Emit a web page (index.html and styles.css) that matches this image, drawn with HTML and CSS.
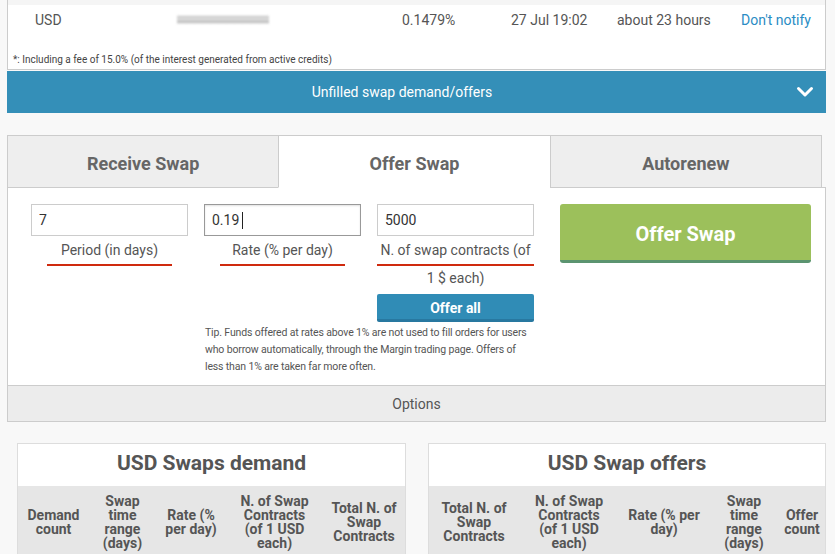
FILE: index.html
```html
<!DOCTYPE html>
<html lang="en">
<head>
    <meta charset="UTF-8">
    <meta name="viewport" content="width=device-width, initial-scale=1.0">
    <title>Swap</title>
    <link rel="stylesheet" href="styles.css">
</head>
<body>
    <div class="page">
        <div class="rates">
            <div class="rates-stripe"></div>
            <div class="rate-row">
                <span>USD</span>
                <span><span class="blurred"></span></span>
                <span>0.1479%</span>
                <span>27 Jul 19:02</span>
                <span>about 23 hours</span>
                <a href="#" class="notify-link">Don't notify</a>
            </div>
            <div class="fee-note">*: Including a fee of 15.0% (of the interest generated from active credits)</div>
        </div>

        <div class="unfilled-bar">
            <span></span>
            <span class="unfilled-title">Unfilled swap demand/offers</span>
            <svg class="chevron" width="18" height="12" viewBox="0 0 18 12">
                <polyline points="2.5,2.5 9,9 15.5,2.5" fill="none" stroke="#fff" stroke-width="3" stroke-linecap="round" stroke-linejoin="round"/>
            </svg>
        </div>

        <div class="swap">
            <div class="tabs">
                <div class="tab">Receive Swap</div>
                <div class="tab active">Offer Swap</div>
                <div class="tab">Autorenew</div>
            </div>
            <div class="swap-body">
                <div class="swap-form">
                    <div class="fields">
                        <div class="field">
                            <input type="text" value="7">
                            <div class="field-label">Period (in days)</div>
                        </div>
                        <div class="field">
                            <div class="input-wrap">
                                <input type="text" value="0.19" class="focused">
                                <span class="caret"></span>
                            </div>
                            <div class="field-label">Rate (% per day)</div>
                        </div>
                        <div class="field">
                            <input type="text" value="5000">
                            <div class="field-label wide">N. of swap contracts (of 1 $ each)</div>
                            <button class="offer-all">Offer all</button>
                        </div>
                        <p class="tip">Tip. Funds offered at rates above 1% are not used to fill orders for users who borrow automatically, through the Margin trading page. Offers of less than 1% are taken far more often.</p>
                    </div>
                    <button class="offer-btn">Offer Swap</button>
                </div>
                <div class="options">Options</div>
            </div>
        </div>

        <div class="books">
            <div class="book">
                <div class="book-title">USD Swaps demand</div>
                <table class="book-table">
                    <colgroup>
                        <col style="width: 71px">
                        <col style="width: 67px">
                        <col style="width: 70px">
                        <col style="width: 97px">
                        <col style="width: 82px">
                    </colgroup>
                    <tr>
                        <th>Demand count</th>
                        <th>Swap time range (days)</th>
                        <th>Rate (% per day)</th>
                        <th class="wide-pad">N. of Swap Contracts (of 1 USD each)</th>
                        <th>Total N. of Swap Contracts</th>
                    </tr>
                </table>
            </div>
            <div class="book">
                <div class="book-title">USD Swap offers</div>
                <table class="book-table">
                    <colgroup>
                        <col style="width: 90px">
                        <col style="width: 100px">
                        <col style="width: 90px">
                        <col style="width: 70px">
                        <col style="width: 46px">
                    </colgroup>
                    <tr>
                        <th>Total N. of Swap Contracts</th>
                        <th class="wide-pad">N. of Swap Contracts (of 1 USD each)</th>
                        <th>Rate (% per day)</th>
                        <th>Swap time range (days)</th>
                        <th>Offer count</th>
                    </tr>
                </table>
            </div>
        </div>
    </div>
</body>
</html>
```

FILE: styles.css
```css
body {
    margin: 0;
    font-family: Roboto, "Liberation Sans", sans-serif;
    background-color: #f8f8f8;
    color: #555;
}

.page {
    width: 819px;
    margin-left: 7px;
}

/* active credits panel */
.rates {
    background-color: #fff;
    border: 1px solid #ccc;
    border-top: none;
}

.rates-stripe {
    height: 5px;
    background-color: #f5f5f5;
}

.rate-row {
    display: grid;
    grid-template-columns: 142px 225px 109px 106px 124px auto;
    align-items: center;
    height: 29px;
    padding-left: 27px;
    font-size: 14px;
}

.blurred {
    display: block;
    width: 92px;
    height: 9px;
    background: linear-gradient(#eee, #bbb 30%, #ddd 50%, #aaa 70%, #e4e4e4);
    filter: blur(1.2px);
    opacity: 0.8;
}

.notify-link {
    color: #2a8cc4;
    text-decoration: none;
}

.fee-note {
    font-size: 10px;
    line-height: 12px;
    padding: 20px 5px 3px;
    color: #444;
}

/* collapsible bar */
.unfilled-bar {
    display: grid;
    grid-template-columns: 1fr auto 1fr;
    align-items: center;
    height: 42px;
    margin-top: 1px;
    background-color: #348fb8;
    color: #fff;
    font-size: 14px;
}

.unfilled-title {
    margin-right: 29px;
}

.chevron {
    justify-self: end;
    margin-right: 12px;
}

/* swap tabs */
.swap {
    margin-top: 22px;
}

.tabs {
    display: flex;
    width: 815px;
}

.tab {
    flex: 1;
    height: 51px;
    line-height: 56px;
    text-align: center;
    font-size: 18px;
    font-weight: 700;
    color: #666;
    background-color: #eee;
    border: 1px solid #ccc;
    border-right: none;
    overflow: hidden;
}

.tab:last-child {
    border-right: 1px solid #ccc;
}

.tab.active {
    background-color: #fff;
    border-bottom-color: #fff;
    position: relative;
}

.swap-body {
    margin-top: -1px;
    background-color: #fff;
    border: 1px solid #ccc;
}

.swap-form {
    display: flex;
    align-items: flex-start;
    gap: 26px;
    padding: 16px 0 10px 23px;
}

.fields {
    display: grid;
    grid-template-columns: repeat(3, 157px);
    column-gap: 16px;
}

.field {
    display: flex;
    flex-direction: column;
}

.input-wrap {
    display: flex;
    position: relative;
}

.input-wrap input {
    flex: 1;
    min-width: 0;
}

.field input {
    box-sizing: border-box;
    height: 32px;
    padding: 0 7px;
    border: 1px solid #ccc;
    font-family: inherit;
    font-size: 14px;
    color: #333;
    outline: none;
}

.field input.focused {
    border-color: #999;
    box-shadow: inset 0 1px 2px rgba(0, 0, 0, 0.12);
}

/* text cursor after the typed value */
.caret {
    position: absolute;
    left: 38px;
    top: 8px;
    width: 1px;
    height: 17px;
    background-color: #222;
}

.field-label {
    width: 125px;
    height: 28px;
    line-height: 28px;
    margin: 0 auto;
    text-align: center;
    font-size: 14px;
    border-bottom: 2px solid #cf2a0e;
}

.field-label.wide {
    width: 157px;
}

.offer-all {
    height: 28px;
    margin-top: 28px;
    padding-top: 3px;
    border: none;
    border-bottom: 3px solid #2878a0;
    border-radius: 2px;
    background-color: #308cb6;
    color: #fff;
    font-family: inherit;
    font-size: 14px;
    font-weight: 700;
}

.tip {
    grid-column: 2 / 4;
    margin: 2px 0 0;
    padding-left: 1px;
    font-size: 10.5px;
    letter-spacing: -0.15px;
    line-height: 17px;
}

.offer-btn {
    width: 251px;
    height: 59px;
    padding-top: 5px;
    border: none;
    border-bottom: 3px solid #5b9470;
    border-radius: 3px;
    background-color: #9cc05b;
    color: #fff;
    font-family: inherit;
    font-size: 20px;
    font-weight: 700;
}

.options {
    height: 35px;
    line-height: 36px;
    text-align: center;
    font-size: 14px;
    background-color: #ececec;
    border-top: 1px solid #ccc;
}

/* order books */
.books {
    display: grid;
    grid-template-columns: 389px 398px;
    column-gap: 22px;
    margin-top: 21px;
    padding-left: 10px;
}

.book {
    background-color: #fff;
    border: 1px solid #ddd;
}

.book-title {
    height: 42px;
    line-height: 38px;
    text-align: center;
    font-size: 21px;
    font-weight: 700;
}

.book-table {
    width: 100%;
    table-layout: fixed;
    border-collapse: collapse;
}

.book-table th {
    padding: 8px 4px;
    background-color: #e6e6e6;
    font-size: 14px;
    line-height: 14px;
    font-weight: 700;
    color: #555;
    vertical-align: middle;
}

.book-table th.wide-pad {
    padding: 8px 10px;
}
```
